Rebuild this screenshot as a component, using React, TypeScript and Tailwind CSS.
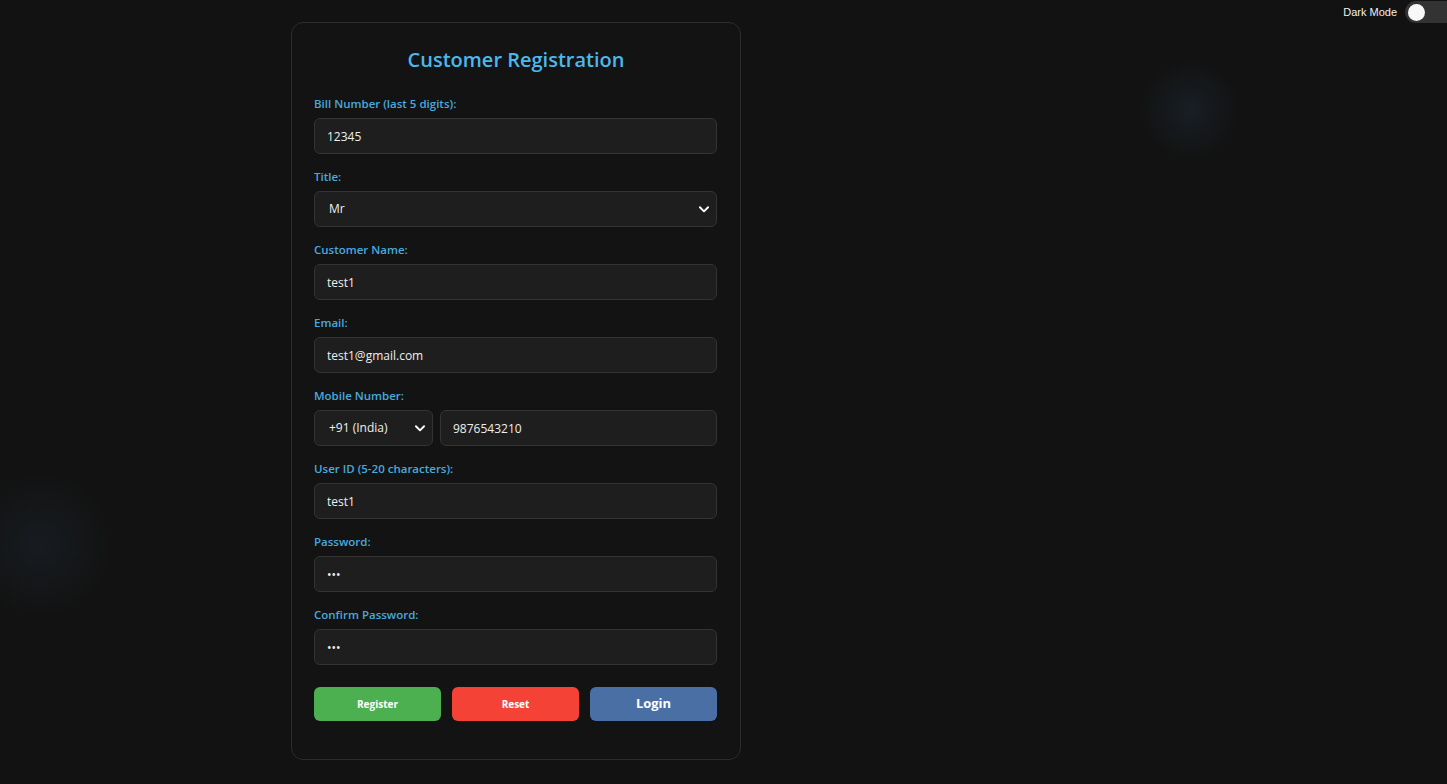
import { useState } from "react";

const font = { fontFamily: '"Open Sans", "Noto Sans", sans-serif' };

function Chevron() {
  return (
    <svg width="14" height="14" viewBox="0 0 24 24" fill="none" stroke="#ffffff" strokeWidth="3.2" strokeLinecap="round" strokeLinejoin="round">
      <path d="M5 9l7 7 7-7" />
    </svg>
  );
}

function Field({ label, children }: { label: string; children: React.ReactNode }) {
  return (
    <div className="flex flex-col">
      <label className="mb-[6px] text-[11.5px] leading-[17px] font-semibold text-[#47aadf]">{label}</label>
      {children}
    </div>
  );
}

const inputCls =
  "h-[36px] w-full rounded-[6px] border border-[#333333] bg-[#1e1e1e] px-[12px] text-[12px] text-[#eeeeee] outline-none";

function Select({ value, className = "" }: { value: string; className?: string }) {
  return (
    <div className={`relative flex h-[36px] items-center rounded-[6px] border border-[#333333] bg-[#1e1e1e] pl-[14px] pr-[5px] text-[12px] text-[#eeeeee] ${className}`}>
      <span className="flex-1">{value}</span>
      <Chevron />
    </div>
  );
}

export default function App() {
  const [dark, setDark] = useState(false);
  const [form, setForm] = useState({
    bill: "12345",
    name: "test1",
    email: "test1@gmail.com",
    mobile: "9876543210",
    user: "test1",
    pass: "abc",
    confirm: "abc",
  });
  const set = (k: keyof typeof form) => (e: React.ChangeEvent<HTMLInputElement>) =>
    setForm({ ...form, [k]: e.target.value });

  return (
    <div className="relative min-h-[784px] w-full overflow-hidden bg-[#121212]" style={font}>
      <div className="pointer-events-none absolute left-[1140px] top-[60px] h-[100px] w-[100px] rounded-full bg-[radial-gradient(circle,rgba(40,60,80,0.3)_0%,rgba(40,60,80,0)_70%)]" />
      <div className="pointer-events-none absolute left-[-30px] top-[470px] h-[150px] w-[140px] rounded-full bg-[radial-gradient(circle,rgba(40,60,80,0.24)_0%,rgba(40,60,80,0)_70%)]" />

      <div className="absolute right-0 top-[1px] flex items-center gap-[8px]">
        <span className="text-[11px] text-[#f0f0f0]" style={{ fontFamily: '"Liberation Sans", Arial, sans-serif' }}>
          Dark Mode
        </span>
        <button
          type="button"
          onClick={() => setDark(!dark)}
          className="flex h-[22px] w-[42px] items-center rounded-l-full bg-[#333333] pl-[3px]"
        >
          <span className="h-[17px] w-[17px] rounded-full bg-[#f8f8f8]" />
        </button>
      </div>

      <div className="relative ml-[291px] pt-[22px] pb-[24px]">
        <div className="w-[450px] rounded-[12px] border border-[#2c2c2c] bg-[#131313] px-[22px] pt-[23px] pb-[38px]">
          <h2 className="mb-[21px] text-center text-[20px] leading-[28px] font-semibold text-[#4bb8ec]">
            Customer Registration
          </h2>
          <div className="flex flex-col gap-[14px] pr-[1px]">
            <Field label="Bill Number (last 5 digits):">
              <input className={inputCls} value={form.bill} onChange={set("bill")} />
            </Field>
            <Field label="Title:">
              <Select value="Mr" />
            </Field>
            <Field label="Customer Name:">
              <input className={inputCls} value={form.name} onChange={set("name")} />
            </Field>
            <Field label="Email:">
              <input className={inputCls} value={form.email} onChange={set("email")} />
            </Field>
            <Field label="Mobile Number:">
              <div className="flex gap-[7px]">
                <Select value="+91 (India)" className="w-[119px] shrink-0" />
                <input className={inputCls} value={form.mobile} onChange={set("mobile")} />
              </div>
            </Field>
            <Field label="User ID (5-20 characters):">
              <input className={inputCls} value={form.user} onChange={set("user")} />
            </Field>
            <Field label="Password:">
              <input type="password" className={inputCls} value={form.pass} onChange={set("pass")} />
            </Field>
            <Field label="Confirm Password:">
              <input type="password" className={inputCls} value={form.confirm} onChange={set("confirm")} />
            </Field>
          </div>
          <div className="mt-[22px] flex gap-[11px] pr-[1px]">
            <button type="button" className="h-[34px] flex-1 rounded-[6px] bg-[#4caf50] text-[10px] font-bold text-white">
              Register
            </button>
            <button type="button" className="h-[34px] flex-1 rounded-[6px] bg-[#f44336] text-[10px] font-bold text-white">
              Reset
            </button>
            <button type="button" className="h-[34px] flex-1 rounded-[6px] bg-[#4a6fa5] text-[13px] font-bold text-white">
              Login
            </button>
          </div>
        </div>
      </div>
    </div>
  );
}
